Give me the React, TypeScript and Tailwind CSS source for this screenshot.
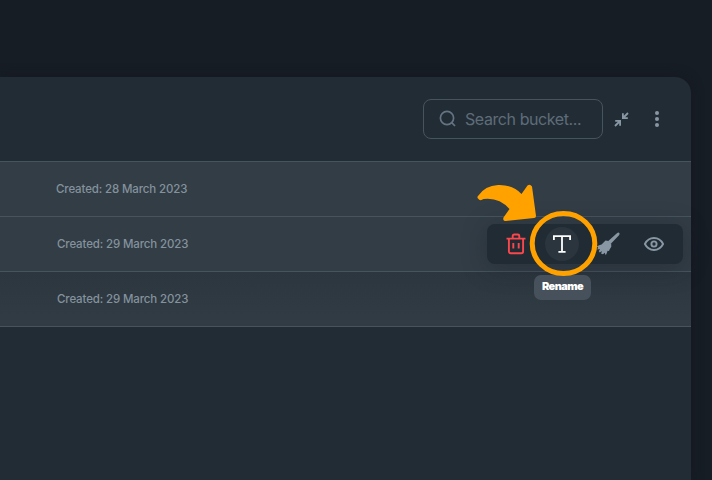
import React from "react";

const rows = [
  { date: "28 March 2023", bg: "bg-[#333d46]", pad: "pl-[56px]" },
  { date: "29 March 2023", bg: "bg-[#333d46]", pad: "pl-[57px]" },
  { date: "29 March 2023", bg: "bg-linear-to-b from-[#2c363e] to-[#323c45]", pad: "pl-[57px]" },
];

function Toolbar() {
  return (
    <div className="relative mr-2 flex h-10 w-[196px] items-center rounded-lg bg-[#212b33] pl-[6px] shadow-[0_4px_24px_rgba(20,28,36,0.35)]">
      <button className="flex w-[46px] justify-center" aria-label="Delete">
        <svg width="20" height="22" viewBox="0 0 20 22" fill="none" stroke="#f9474d" strokeWidth="1.9">
          <path d="M0.5 5.6H19.5M6.7 5.5V3Q6.7 1.5 8.2 1.5H11.8Q13.3 1.5 13.3 3V5.5M2.9 6V18.5Q2.9 20.2 4.6 20.2H15.4Q17.1 20.2 17.1 18.5V6M7.3 10V15.5M12.7 10V15.5" />
        </svg>
      </button>
      <button className="flex w-[46px] justify-center" aria-label="Rename">
        <span className="flex size-[34px] items-center justify-center rounded-full bg-[#2a353e]">
          <svg width="18" height="18" viewBox="0 0 18 18" fill="none" stroke="#ffffff" strokeWidth="1.8">
            <path d="M0.9 5V1.1H17.1V5M9 1.1V16.7M5.4 16.9H12.6" />
          </svg>
        </span>
      </button>
      <button className="flex w-[46px] justify-center" aria-label="Clean">
        <svg width="24" height="24" viewBox="0 0 24 24" fill="#8997a5">
          <path d="M21.2 1Q22.6 0 23.4 1.1Q24 2.2 22.8 3.4L14.8 11.8L12 9.2Z" />
          <path d="M9.5 8.6L12.6 9L15.2 11.800L15.3 14.7L13.6 17.600L13 19L11.6 18.7L10.8 21L9.8 23.300L8.700 20.700L7 22.200L5.200 21.700L5.800 19L3.800 20.500L2.800 19.300L4 17L1.400 17.600L2 15.500L.8 14.200L3.900 13L5.600 12.600Z" />
        </svg>
      </button>
      <button className="flex w-[46px] justify-center" aria-label="View">
        <svg width="20" height="14" viewBox="0 0 20 14" fill="none" stroke="#8997a5" strokeWidth="1.9">
          <path d="M.9 7Q4 1 10 1T19.1 7Q16 13 10 13T.9 7Z" />
          <circle cx="10" cy="7" r="2.6" />
        </svg>
      </button>
      <span className="absolute left-[47px] top-[51px] flex h-[25px] w-[57px] items-center justify-center rounded-[7px] bg-[#46515c] pb-[2px] text-[11px] font-black tracking-[-0.6px] text-white">
        Rename
      </span>
    </div>
  );
}

export default function App() {
  return (
    <main className="relative h-[480px] w-[712px] overflow-hidden bg-[#161d24] pt-[77px] font-['Inter',sans-serif]">
      <section className="h-[403px] w-[691px] rounded-tr-[16px] bg-[#222c35] shadow-[0_0_12px_rgba(24,24,34,0.8)]">
        <header className="flex h-[84px] items-center justify-end pr-[30px]">
          <div className="flex h-10 w-[180px] items-center rounded-lg border border-[#46545e] pl-[15px]">
            <svg width="18" height="18" viewBox="0 0 18 18" fill="none" stroke="#657482" strokeWidth="1.7">
              <circle cx="8" cy="8" r="6.6" />
              <path d="M12.7 12.7L16 16" />
            </svg>
            <span className="ml-2 whitespace-nowrap text-[16px] tracking-[-0.42px] text-[#5e6c79]">Search bucket...</span>
          </div>
          <svg className="ml-[11px]" width="15" height="15" viewBox="0 0 15 15" fill="none" stroke="#8997a5" strokeWidth="1.8">
            <path d="M14 1L9.5 5.5M8.9 1.2V6.1H13.8M1 14L5.5 9.5M6.1 13.8V8.9H1.2" />
          </svg>
          <svg className="ml-[22px]" width="10" height="18" viewBox="0 0 10 18" fill="#8997a5">
            <circle cx="6" cy="3" r="2" />
            <circle cx="6" cy="9" r="2" />
            <circle cx="6" cy="15" r="2" />
          </svg>
        </header>
        <div className="border-b border-[#46545e]">
          {rows.map((row, i) => (
            <div
              key={i}
              className={`flex h-[55px] items-center justify-between border-t border-[#46545e] ${row.bg} ${row.pad} ${i === 1 ? "relative z-10" : ""}`}
            >
              <span className="pt-[2px] text-[11.5px] font-medium tracking-[-0.14px] text-[#84929d]">Created: {row.date}</span>
              {i === 1 && <Toolbar />}
            </div>
          ))}
        </div>
      </section>
      <svg className="pointer-events-none absolute left-[470px] top-[175px] z-20" width="140" height="110" viewBox="0 0 140 110">
        <ellipse cx="93.5" cy="68.5" rx="31.3" ry="30" fill="none" stroke="#ffa200" strokeWidth="5" />
        <path
          d="M8 21Q15 10.5 28 10Q43 9.5 51.5 19L57.5 10.5Q60 8.5 62 11.5L66 41Q66 43 64 43L36 46Q32.5 46 33.5 42.5L39.5 34Q29 22 13.5 24Q10 26.5 8 23.5Q6.9 22 8 21Z"
          fill="#ffa200"
        />
      </svg>
    </main>
  );
}
